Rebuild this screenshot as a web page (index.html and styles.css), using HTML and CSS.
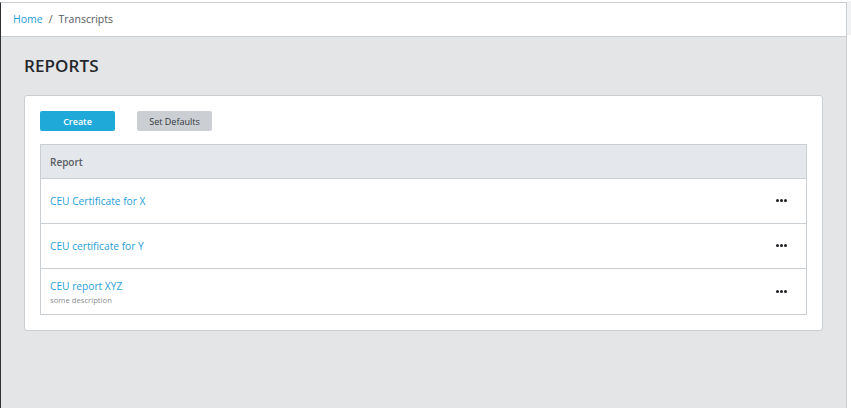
FILE: index.html
```html
<!DOCTYPE html>
<html>
<head>
<meta charset="utf-8">
<link rel="stylesheet" href="styles.css">
</head>
<body>
<div class="page">
  <div class="app">
    <header class="topbar">
      <nav class="crumbs"><a class="crumb-link">Home</a><span class="sep">/</span><span class="crumb-current">Transcripts</span></nav>
    </header>
    <main class="main">
      <h1 class="title">REPORTS</h1>
      <section class="card">
        <div class="actions">
          <button class="btn btn-primary">Create</button>
          <button class="btn btn-secondary">Set Defaults</button>
        </div>
        <table class="grid">
          <thead>
            <tr><th colspan="2">Report</th></tr>
          </thead>
          <tbody>
            <tr>
              <td><div class="cell"><a class="report-link">CEU Certificate for X</a></div></td>
              <td class="more-cell"><span class="more"><i></i><i></i><i></i></span></td>
            </tr>
            <tr>
              <td><div class="cell"><a class="report-link">CEU certificate for Y</a></div></td>
              <td class="more-cell"><span class="more"><i></i><i></i><i></i></span></td>
            </tr>
            <tr class="tall">
              <td><div class="cell"><a class="report-link">CEU report XYZ</a><div class="desc">some description</div></div></td>
              <td class="more-cell"><span class="more"><i></i><i></i><i></i></span></td>
            </tr>
          </tbody>
        </table>
      </section>
    </main>
  </div>
  <div class="rail"><div class="rail-top"></div></div>
</div>
</body>
</html>
```
FILE: styles.css
```css
html, body {
  margin: 0;
  padding: 0;
  height: 100%;
  background: #ffffff;
  font-family: "Open Sans", "Noto Sans", "Liberation Sans", sans-serif;
}
.page {
  display: flex;
  height: 100%;
  padding-top: 2px;
  box-sizing: border-box;
}
.app {
  width: 847px;
  box-sizing: border-box;
  border-top: 1px solid #c9ced3;
  border-left: 1px solid #2e3033;
  border-right: 1px solid #c9ced3;
  background: #e4e5e7;
  display: flex;
  flex-direction: column;
}
.rail {
  flex: 1;
  margin-top: -1px;
}
.rail-top {
  height: 34px;
  background: #f1f2f3;
}
.topbar {
  height: 33px;
  background: #ffffff;
  border-bottom: 1px solid #c9ced3;
  display: flex;
  align-items: center;
  padding-left: 12px;
}
.crumbs {
  font-size: 10.5px;
  color: #555a60;
  display: flex;
  align-items: center;
  margin-top: -2px;
}
.crumb-link { color: #1fa0d8; }
.sep { margin: 0 6px 0 6px; color: #555a60; }
.main {
  padding: 17px 23px 0 23px;
}
.title {
  margin: 0 0 17px 0;
  font-size: 17px;
  line-height: 24px;
  font-weight: 600;
  color: #23272b;
  letter-spacing: 0.1px;
}
.card {
  background: #ffffff;
  border: 1px solid #c9ced3;
  border-radius: 3px;
  padding: 15px;
}
.actions {
  display: flex;
  gap: 22px;
  margin-bottom: 13px;
}
.btn {
  width: 75px;
  height: 20px;
  border: 0;
  border-radius: 2px;
  font-family: inherit;
  font-size: 9px;
  padding: 0;
  font-weight: 600;
}
.btn-primary { background: #1fa9d9; color: #ffffff; }
.btn-secondary { background: #cbcfd4; color: #33373b; font-weight: 500; }
.grid {
  width: 100%;
  border-collapse: collapse;
  border: 1px solid #c9ced3;
}
.grid th {
  background: #e4e7eb;
  height: 33px;
  padding: 0 0 0 9px;
  text-align: left;
  font-size: 10px;
  font-weight: 600;
  color: #5a5e63;
  border-bottom: 1px solid #c9ced3;
}
.grid td {
  height: 44px;
  padding: 0 0 0 9px;
  border-bottom: 1px solid #c9ced3;
  vertical-align: middle;
}
.grid tr.tall td { height: 45px; }
.cell {
  margin-top: -5px;
}
.report-link {
  font-size: 10.2px;
  color: #1fa0d8;
}
.desc {
  font-size: 7.7px;
  color: #8a8e93;
  margin-top: 0;
}
.more-cell {
  width: 40px;
  text-align: right;
  padding-right: 19px !important;
}
.more {
  display: inline-flex;
  gap: 1px;
  vertical-align: middle;
  position: relative;
  top: -2px;
}
.more i {
  width: 3px;
  height: 3px;
  border-radius: 50%;
  background: #1b1d20;
  display: block;
}
```
